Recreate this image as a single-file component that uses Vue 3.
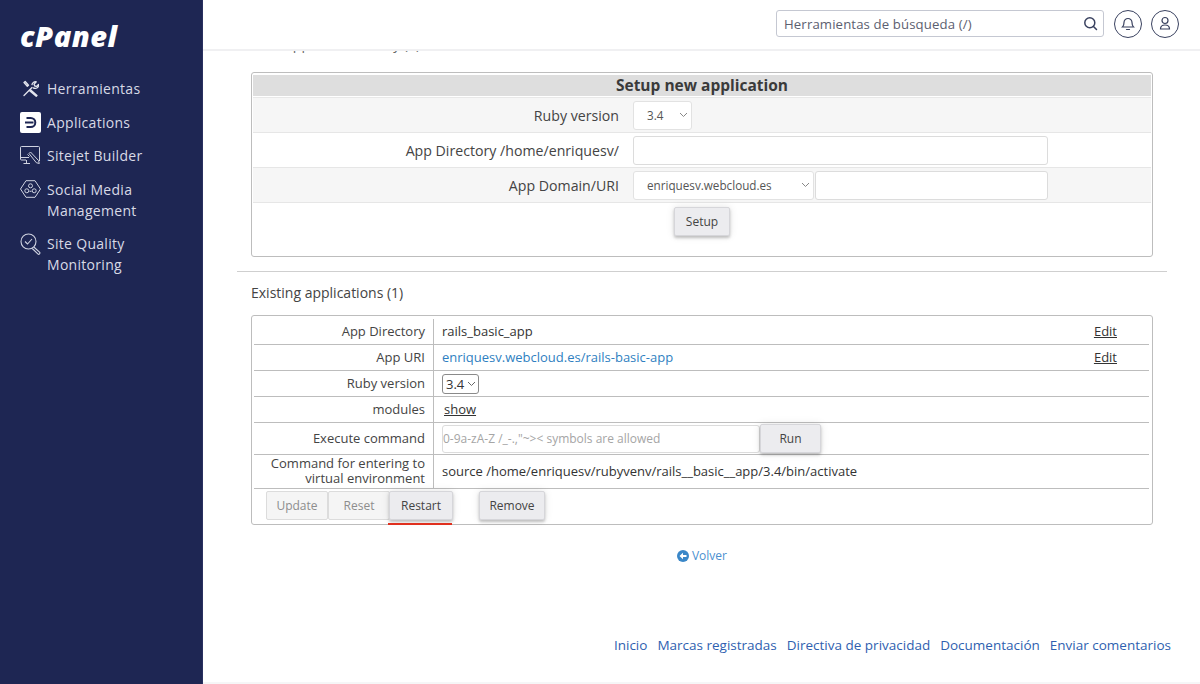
<script setup>
const nav = [
  { id: 'tools', label: 'Herramientas' },
  { id: 'apps', label: 'Applications' },
  { id: 'site', label: 'Sitejet Builder' },
  { id: 'social', label: 'Social Media Management' },
  { id: 'quality', label: 'Site Quality Monitoring' }
]
const links = ['Inicio', 'Marcas registradas', 'Directiva de privacidad', 'Documentación', 'Enviar comentarios']
</script>

<template>
  <div class="app">
    <aside class="sidebar">
      <div class="logo">cPanel</div>
      <nav class="nav">
        <a v-for="n in nav" :key="n.id" class="nav-item">
          <span class="nav-icon">
            <svg v-if="n.id === 'tools'" width="17" height="17" viewBox="0 0 17 17" fill="none" stroke="#e3e5ee" stroke-width="1.300" stroke-linecap="round" stroke-linejoin="round">
              <path d="M2 15.500 10 7.500" />
              <path d="M10 4.500c.4-2 2.400-3.200 4.300-2.600l-2.300 2.300.8 1.800 1.800.4 1.900-2c.4 2-1 3.900-3 4-.9.100-1.600-.1-2.200-.5" />
              <path d="M2 2.500l1.200-1 3.300 3.700-1.200 1.100zM8.500 9.700l6.500 5.800-.8.800-6.600-5.600" />
            </svg>
            <svg v-else-if="n.id === 'apps'" width="21" height="21" viewBox="0 0 21 21">
              <rect x="0" y="0" width="21" height="21" rx="2" fill="#fff" />
              <path d="M6.500 5.900h4.200a4.600 4.600 0 0 1 0 9.200H6.500" fill="none" stroke="#1e2653" stroke-width="2" />
              <path d="M5 10.500h8.500" stroke="#1e2653" stroke-width="2" />
            </svg>
            <svg v-else-if="n.id === 'site'" width="21" height="20" viewBox="0 0 21 20" fill="none" stroke="#cfd2e0" stroke-width="1">
              <path d="M6 14H1.500a1 1 0 0 1-1-1V1.500a1 1 0 0 1 1-1h17a1 1 0 0 1 1 1V15" />
              <path d="M1 11.500h8M6.500 14v3M3.500 17.500h6.500" />
              <path d="M9 7.500l1.500-1.500 8 8.500.8 3-3-.8zM7.500 8.500l2 2" />
            </svg>
            <svg v-else-if="n.id === 'social'" width="21" height="18" viewBox="0 0 21 18" fill="none" stroke="#cfd2e0" stroke-width="1">
              <path d="M6 .7h9l5.500 8.300-5.500 8.300H6L.5 9z" />
              <circle cx="10.500" cy="5.800" r="2" /><circle cx="6.800" cy="10.800" r="2" /><circle cx="14.200" cy="10.800" r="2" />
              <path d="M9.500 11.300h2" />
            </svg>
            <svg v-else width="21" height="22" viewBox="0 0 21 22" fill="none" stroke="#cfd2e0" stroke-width="1.100">
              <circle cx="8.500" cy="8.500" r="7.500" /><path d="M5 8.500l2.500 2.500 4.500-5" />
              <path d="M13.800 14l5.700 5.200a1.200 1.200 0 0 1-1.700 1.700L12.300 15.500" />
            </svg>
          </span>
          <span class="nav-label">{{ n.label }}</span>
        </a>
      </nav>
    </aside>

    <div class="main">
      <header class="topbar">
        <div class="search">
          <span class="search-text">Herramientas de búsqueda (/)</span>
          <svg width="15" height="15" viewBox="0 0 15 15" fill="none" stroke="#39415f" stroke-width="1.500" stroke-linecap="round"><circle cx="6.800" cy="6.800" r="5" /><path d="M10.500 10.500l3 3" /></svg>
        </div>
        <button class="round">
          <svg width="14" height="15" viewBox="0 0 14 15" fill="none" stroke="#39415f" stroke-width="1.200" stroke-linecap="round"><path d="M1.500 11h11c-1-1-1.500-2-1.500-4.500a4 4 0 0 0-8 0C3 9 2.500 10 1.500 11z" /><path d="M5.500 13.500h3" /></svg>
        </button>
        <button class="round">
          <svg width="14" height="15" viewBox="0 0 14 15" fill="none" stroke="#39415f" stroke-width="1.200" stroke-linecap="round"><circle cx="7" cy="4.500" r="3" /><path d="M2.500 13c0-2.500 1.500-4 4.500-4s4.500 1.500 4.500 4z" /></svg>
        </button>
      </header>

      <main class="content">
        <div class="clipped">Web Applications Ruby (1)</div>

        <section class="card setup">
          <h2 class="setup-title">Setup new application</h2>
          <div class="form-row shade">
            <label class="form-label">Ruby version</label>
            <div class="fields"><select class="select ver"><option>3.4</option></select></div>
          </div>
          <div class="form-row">
            <label class="form-label">App Directory /home/enriquesv/</label>
            <div class="fields"><input class="input wide" /></div>
          </div>
          <div class="form-row shade">
            <label class="form-label">App Domain/URI</label>
            <div class="fields">
              <select class="select domain"><option>enriquesv.webcloud.es</option></select>
              <input class="input uri" />
            </div>
          </div>
          <div class="setup-actions"><button class="btn setup-btn">Setup</button></div>
        </section>

        <hr class="divider" />

        <h3 class="existing">Existing applications (1)</h3>

        <section class="card apps">
          <div class="row h26">
            <div class="key">App Directory</div>
            <div class="val">rails_basic_app<a class="edit">Edit</a></div>
          </div>
          <div class="row h26">
            <div class="key">App URI</div>
            <div class="val"><a class="uri-link">enriquesv.webcloud.es/rails-basic-app</a><a class="edit">Edit</a></div>
          </div>
          <div class="row h26">
            <div class="key">Ruby version</div>
            <div class="val"><select class="mini"><option>3.4</option></select></div>
          </div>
          <div class="row h26">
            <div class="key">modules</div>
            <div class="val"><a class="show">show</a></div>
          </div>
          <div class="row h32">
            <div class="key">Execute command</div>
            <div class="val cmd">
              <input class="cmd-input" placeholder='0-9a-zA-Z /_-.,"~>< symbols are allowed' />
              <button class="btn run">Run</button>
            </div>
          </div>
          <div class="row h34">
            <div class="key two">Command for entering to virtual environment</div>
            <div class="val">source /home/enriquesv/rubyvenv/rails__basic__app/3.4/bin/activate</div>
          </div>
          <div class="actions">
            <button class="btn off">Update</button>
            <button class="btn off">Reset</button>
            <button class="btn restart">Restart</button>
            <button class="btn remove">Remove</button>
          </div>
        </section>

        <a class="back">
          <svg width="12" height="12" viewBox="0 0 12 12"><circle cx="6" cy="6" r="6" fill="#3a87c8" /><path d="M2.500 6 6 2.800V5h3.500v2H6v2.200z" fill="#fff" /></svg>
          Volver
        </a>

        <footer class="footer">
          <a v-for="l in links" :key="l" class="foot-link">{{ l }}</a>
        </footer>
      </main>
    </div>
  </div>
</template>

<style>
html, body { margin: 0; background: #fff; }
</style>

<style scoped>
* { box-sizing: border-box; }
.app { display: flex; width: 1200px; height: 684px; overflow: hidden; font-family: "Open Sans", sans-serif; color: #3d3d3d; background: #fff; }
.sidebar { width: 203px; flex: none; background: #1e2653; border-right: 1px solid #2a3160; padding: 20px 0 0 20px; }
.logo { height: 32px; font-weight: 800; font-style: italic; font-size: 29px; line-height: 32px; letter-spacing: .5px; color: #fff; }
.nav { display: flex; flex-direction: column; margin-top: 26px; gap: 12.500px; }
.nav-item { display: flex; gap: 6px; color: #d8dae6; font-size: 14px; line-height: 21px; letter-spacing: .3px; }
.nav-icon { width: 21px; height: 21px; flex: none; display: flex; align-items: center; justify-content: center; }
.nav-label { width: 110px; }
.main { flex: 1; min-width: 0; display: flex; flex-direction: column; border-bottom: 2px solid #f6f6f7; }
.topbar { height: 51px; flex: none; display: flex; align-items: center; justify-content: flex-end; gap: 9px; padding: 0 21px 2px 0; border-bottom: 2px solid #f0f0f2; position: relative; z-index: 1; background: #fff; }
.search { width: 328px; height: 27px; border: 1px solid #c5c8d2; border-radius: 3px; display: flex; align-items: center; justify-content: space-between; padding: 0 5px 0 7px; margin-right: 1px; }
.search-text { font-size: 13.200px; color: #5c6070; letter-spacing: .12px; }
.round { width: 28px; height: 28px; border: 1px solid #39415f; border-radius: 50%; background: #fff; padding: 0; display: flex; align-items: center; justify-content: center; }
.content { flex: 1; min-height: 0; padding: 0 33px 0 34px; display: flex; flex-direction: column; position: relative; }
.clipped { height: 19px; margin: -17px 0 19px 14px; font-size: 14px; line-height: 19px; color: #666; }
.card { margin: 0 14px; border: 1px solid #bdbdbd; border-radius: 3px; background: #fff; }
.setup { height: 185px; padding: 2px 1px 0; }
.setup-title { margin: 0; height: 21px; background: #dedede; text-align: center; font-size: 15.500px; line-height: 21px; font-weight: 700; color: #3a3a3a; }
.form-row { height: 35px; display: grid; grid-template-columns: 366px 1fr; column-gap: 14px; align-items: center; border-bottom: 1px solid #e6e6e6; }
.form-row.shade { background: #f6f6f6; }
.setup-title + .form-row { margin-top: 1px; border-top: 1px solid #e8e8e8; height: 36px; }
.form-label { text-align: right; font-size: 14.160px; color: #444; }
.fields { display: flex; align-items: center; gap: 1px; }
.select { appearance: none; height: 29px; border: 1px solid #e2e2e2; border-radius: 3px; font-family: inherit; font-size: 11.700px; color: #555; padding: 0 13px; background: #fff url("data:image/svg+xml,%3Csvg xmlns='http://www.w3.org/2000/svg' width='9' height='6'%3E%3Cpath d='M1 1l3.500 3.500L8 1' fill='none' stroke='%23888'/%3E%3C/svg%3E") no-repeat right 3px center; }
.ver { width: 59px; }
.domain { width: 181px; }
.input { height: 29px; border: 1px solid #dcdcdc; border-radius: 3px; background: #fff; }
.wide { width: 415px; }
.uri { width: 233px; }
.setup-actions { display: flex; justify-content: center; padding-top: 4px; }
.btn { height: 29px; border: 1px solid #d6d6da; border-radius: 2px; background: #ececef; font-family: inherit; font-size: 12px; color: #444; padding: 0 10px; box-shadow: 0 2px 3px rgba(0,0,0,.22), 0 0 8px rgba(0,0,0,.1); }
.setup-btn { width: 56px; height: 29px; }
.divider { margin: 14px 0 0; border: 0; border-top: 1px solid #cfcfcf; }
.existing { margin: 12px 14px 14px; font-size: 14px; line-height: 17px; font-weight: 400; color: #444; }
.apps { height: 210px; padding: 3px 3px 0 2px; font-size: 13px; }
.row { display: grid; grid-template-columns: 180px 1fr; border-bottom: 1px solid #bdbdbd; }
.h26 { height: 26px; }
.h32 { height: 32px; }
.h34 { height: 34px; }
.key { text-align: right; padding-right: 8px; border-right: 1px solid #bdbdbd; line-height: 25px; color: #444; font-size: 13px; }
.h32 .key { line-height: 31px; }
.key.two { line-height: 15px; padding: 1px 8px 0 10px; }
.val { position: relative; padding-left: 8px; line-height: 25px; color: #333; font-size: 13px; display: flex; align-items: center; }
.edit { position: absolute; right: 32px; top: 0; text-decoration: underline; color: #333; }
.uri-link { color: #2f7fc1; }
.mini { appearance: none; width: 37px; height: 20px; border: 1px solid #8a8a8a; border-radius: 3px; background: #fff url("data:image/svg+xml,%3Csvg xmlns='http://www.w3.org/2000/svg' width='9' height='6'%3E%3Cpath d='M1 1l3.500 3.500L8 1' fill='none' stroke='%23666'/%3E%3C/svg%3E") no-repeat right 2px center; font-family: inherit; font-size: 13px; color: #333; padding: 0 3px; }
.show { margin-left: 2px; text-decoration: underline; color: #333; }
.cmd { gap: 0; }
.cmd-input { width: 318px; height: 28px; border: 1px solid #dcdcdc; border-radius: 3px; font-family: inherit; font-size: 12px; padding: 0; }
.cmd-input::placeholder { color: #a5a5a5; opacity: 1; }
.run { width: 61px; height: 29px; }
.actions { display: flex; padding: 2px 0 0 12px; }
.off { color: #8d8d8d; background: #f5f5f5; box-shadow: none; border-color: #dcdcdc; width: 62px; padding: 0; }
.restart { width: 64px; padding: 0; margin-left: -1px; position: relative; }
.restart::after { content: ""; position: absolute; left: -2px; right: 0; bottom: -6px; height: 2px; background: #e0301e; }
.remove { width: 66px; padding: 0; margin-left: 26px; }
.back { display: flex; align-items: center; justify-content: center; gap: 3px; margin: 23px 0 0; font-size: 12px; line-height: 16px; color: #4a90d0; }
.footer { display: flex; justify-content: flex-end; gap: 10px; margin: 72px -4px 0 0; font-size: 13.500px; line-height: 19px; }
.foot-link { color: #2f5fb0; }
</style>
